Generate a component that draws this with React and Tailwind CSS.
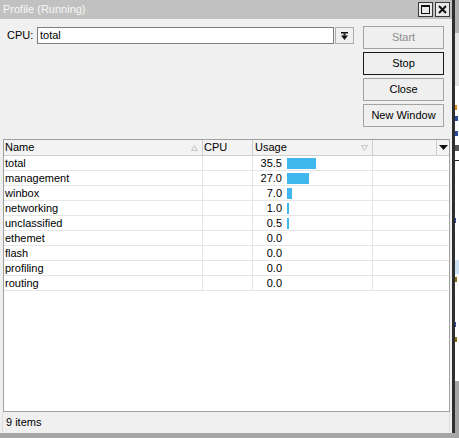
import React from 'react';

const rows = [
  { name: 'total', usage: '35.5', bar: 29 },
  { name: 'management', usage: '27.0', bar: 22 },
  { name: 'winbox', usage: '7.0', bar: 5 },
  { name: 'networking', usage: '1.0', bar: 2 },
  { name: 'unclassified', usage: '0.5', bar: 2 },
  { name: 'ethemet', usage: '0.0', bar: 0 },
  { name: 'flash', usage: '0.0', bar: 0 },
  { name: 'profiling', usage: '0.0', bar: 0 },
  { name: 'routing', usage: '0.0', bar: 0 },
];

function TitleButton({ children }) {
  return (
    <div className="w-[15px] h-[15px] border border-[#3a3a3a] bg-[#e9e9e9] flex items-center justify-center">
      {children}
    </div>
  );
}

function Button({ label, disabled, focused }) {
  return (
    <div
      className={`h-[23px] flex items-center justify-center bg-[#efefef] border ${
        focused ? 'border-[#1a1a1a]' : 'border-[#a3a3a3]'
      } ${disabled ? 'text-[#8d8d8d]' : 'text-black'}`}
    >
      {label}
    </div>
  );
}

function SortUp() {
  return (
    <svg width="7" height="6" viewBox="0 0 7 6">
      <path d="M3.5 0.5 L6.5 5.5 L0.5 5.5 Z" fill="none" stroke="#c4c4c4" strokeWidth="1" />
    </svg>
  );
}

function SortDown() {
  return (
    <svg width="7" height="6" viewBox="0 0 7 6">
      <path d="M0.5 0.5 L6.5 0.5 L3.5 5.5 Z" fill="none" stroke="#c4c4c4" strokeWidth="1" />
    </svg>
  );
}

export default function App() {
  return (
    <div
      className="w-[459px] h-[438px] bg-[#a6a6a6] flex overflow-hidden text-[11px] leading-none text-black"
      style={{ fontFamily: '"Liberation Sans", Arial, sans-serif' }}
    >
      <div className="flex h-[433px]">
        {/* window */}
        <div className="w-[452px] h-full flex flex-col bg-[#f0f0f0]">
          <div className="h-[19px] bg-[#c1c1c1] flex items-center justify-between pl-[3px] pr-[2px] text-[#f7f7f7]">
            <span>Profile (Running)</span>
            <div className="flex gap-[2px]">
              <TitleButton>
                <svg width="9" height="9" viewBox="0 0 9 9">
                  <rect x="0.5" y="0.5" width="8" height="8" fill="none" stroke="#111" />
                  <rect x="0" y="0" width="9" height="2" fill="#111" />
                </svg>
              </TitleButton>
              <TitleButton>
                <svg width="9" height="9" viewBox="0 0 9 9">
                  <path d="M1 1 L8 8 M8 1 L1 8" stroke="#111" strokeWidth="2" />
                </svg>
              </TitleButton>
            </div>
          </div>

          <div className="flex pt-[7px] pl-[7px] pr-[8px]">
            <div className="flex-1 flex items-start pt-[1px]">
              <span className="w-[30px] h-[17px] flex items-center">CPU:</span>
              <div className="w-[297px] h-[17px] bg-white border border-[#7d7d7d] flex items-center pl-[2px]">
                total
              </div>
              <div className="ml-[1px] w-[19px] h-[17px] border border-[#adadad] bg-[#f0f0f0] flex items-center justify-center">
                <svg width="7" height="8" viewBox="0 0 7 8">
                  <rect x="0" y="0" width="7" height="1.5" fill="#111" />
                  <rect x="2.5" y="1.5" width="2" height="2" fill="#111" />
                  <path d="M0 3.5 L7 3.5 L3.5 8 Z" fill="#111" />
                </svg>
              </div>
            </div>
            <div className="w-[81px] flex flex-col gap-[3px]">
              <Button label="Start" disabled />
              <Button label="Stop" focused />
              <Button label="Close" />
              <Button label="New Window" />
            </div>
          </div>

          <div className="mt-[12px] ml-[3px] mr-[2px] flex-1 flex flex-col bg-white border border-[#a0a0a0]">
            <div className="h-[16px] flex bg-[#f3f3f3] border-b border-[#cfcfcf]">
              <div className="w-[199px] border-r border-[#cdcdcd] flex items-center justify-between pl-[1px] pr-[4px]">
                <span>Name</span>
                <SortUp />
              </div>
              <div className="w-[50px] border-r border-[#cdcdcd] flex items-center pl-[1px]">CPU</div>
              <div className="w-[120px] border-r border-[#cdcdcd] flex items-center justify-between pl-[2px] pr-[4px]">
                <span>Usage</span>
                <SortDown />
              </div>
              <div className="w-[64px] border-r border-[#cdcdcd]" />
              <div className="flex-1 flex items-center justify-center">
                <svg width="9" height="5" viewBox="0 0 9 5">
                  <path d="M0 0 L9 0 L4.5 5 Z" fill="#111" />
                </svg>
              </div>
            </div>
            {rows.map((r) => (
              <div key={r.name} className="h-[15px] flex border-b border-[#e6e6e6]">
                <div className="w-[199px] border-r border-[#e6e6e6] flex items-center pl-[1px]">{r.name}</div>
                <div className="w-[50px] border-r border-[#e6e6e6]" />
                <div className="w-[120px] border-r border-[#e6e6e6] flex items-center">
                  <span className="w-[29px] text-right">{r.usage}</span>
                  {r.bar > 0 && (
                    <div className="ml-[5px] h-[11px] bg-[#41b7ef]" style={{ width: `${r.bar}px` }} />
                  )}
                </div>
                <div className="flex-1" />
              </div>
            ))}
          </div>

          <div className="h-[20px] mx-[2px] mb-[1px] flex items-center pl-[3px] border-l border-r border-[#dcdcdc]">
            9 items
          </div>
        </div>
        <div className="w-[3px] h-full bg-[#2e2e2e]" />
      </div>

      {/* background window strip */}
      <div className="flex-1 h-[381px] flex flex-col">
        <div className="h-[33px] bg-[#b3b3b3]" />
        <div className="h-[53px] bg-[#e4e4e4]" />
        <div className="flex-1 bg-white flex flex-col">
          <div className="mt-[19px] h-[5px] w-[2px] bg-[#e08a2a]" />
          <div className="mt-[6px] h-[5px] w-[3px] bg-[#2a4b9a]" />
          <div className="mt-[10px] h-[5px] w-[3px] bg-[#2a4b9a]" />
          <div className="mt-[9px] h-[6px] w-[4px] bg-[#555]" />
          <div className="mt-[9px] h-[1px] w-full bg-[#222]" />
          <div className="mt-[57px] h-[5px] w-[1px] bg-[#2a4b9a]" />
          <div className="mt-[37px] h-[14px] bg-[#cfe3f7]" />
          <div className="mt-[3px] h-[5px] w-[2px] bg-[#8a6d1c]" />
          <div className="mt-[40px] h-[5px] w-[1px] bg-[#2a4b9a]" />
          <div className="mt-[10px] h-[5px] w-[2px] bg-[#8a6d1c]" />
        </div>
      </div>
    </div>
  );
}
